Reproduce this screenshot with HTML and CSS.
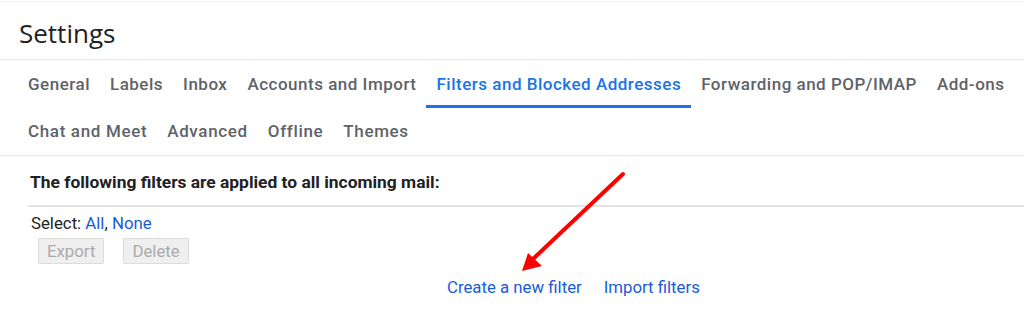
FILE: index.html
```html
<!DOCTYPE html>
<html>
<head>
<meta charset="utf-8">
<link rel="stylesheet" href="styles.css">
</head>
<body>
<div class="page">
  <header class="header"><h1 class="title">Settings</h1></header>
  <nav class="tabs">
    <div class="tab-row">
      <span class="tab">General</span>
      <span class="tab">Labels</span>
      <span class="tab">Inbox</span>
      <span class="tab">Accounts and Import</span>
      <span class="tab active">Filters and Blocked Addresses</span>
      <span class="tab">Forwarding and POP/IMAP</span>
      <span class="tab">Add-ons</span>
    </div>
    <div class="tab-row row2">
      <span class="tab">Chat and Meet</span>
      <span class="tab">Advanced</span>
      <span class="tab">Offline</span>
      <span class="tab">Themes</span>
    </div>
  </nav>
  <section class="content">
    <div class="filters-head">The following filters are applied to all incoming mail:</div>
    <div class="select">Select: <a class="link">All</a>, <a class="link">None</a></div>
    <div class="buttons">
      <button class="btn" disabled>Export</button>
      <button class="btn" disabled>Delete</button>
    </div>
    <div class="actions">
      <a class="link">Create a new filter</a>
      <a class="link">Import filters</a>
    </div>
  </section>
  <svg class="arrow" width="1024" height="325" viewBox="0 0 1024 325">
    <line x1="623" y1="174" x2="533" y2="259" stroke="#ff0000" stroke-width="4" stroke-linecap="round"/>
    <polygon points="522,271 528,253 542,266" fill="#ff0000"/>
  </svg>
</div>
</body>
</html>
```
FILE: styles.css
```css
html, body {
  margin: 0;
  padding: 0;
  background: #fff;
}
body {
  font-family: Roboto, "Liberation Sans", Arial, sans-serif;
  color: #202124;
}
.page {
  position: relative;
  width: 1024px;
  height: 325px;
  overflow: hidden;
  padding-top: 1px;
  box-sizing: border-box;
}
.header {
  border-top: 1px solid #efefef;
  height: 58px;
  box-sizing: border-box;
  padding: 16px 0 0 19px;
}
.title {
  margin: 0;
  font-family: "Open Sans", Roboto, sans-serif;
  font-weight: 400;
  font-size: 26px;
  line-height: 30px;
  color: #202124;
}
.tabs {
  border-top: 1px solid #e6e6e6;
  border-bottom: 1px solid #e6e6e6;
}
.tab-row {
  display: flex;
  padding-left: 18px;
  height: 48px;
}
.tab-row.row2 {
  height: 47px;
}
.tab {
  padding: 0 10px;
  font-size: 17px;
  font-weight: 500;
  letter-spacing: 0.5px;
  line-height: 48px;
  color: #5f6368;
  white-space: nowrap;
  box-sizing: border-box;
}
.row2 .tab {
  letter-spacing: 0.65px;
}
.tab.active {
  color: #1a73e8;
  box-shadow: inset 0 -3px 0 #1a73e8;
}
.row2 .tab {
  line-height: 47px;
}
.content {
  margin-left: 28px;
  font-size: 16.8px;
}
.filters-head {
  font-weight: 700;
  font-size: 17.4px;
  line-height: 20px;
  padding: 16px 2px 13px;
  border-bottom: 2px solid #e3e3e3;
  color: #202124;
}
.select {
  padding: 6px 3px 0;
  line-height: 20px;
  color: #222;
}
.link {
  color: #1a5bd6;
  cursor: pointer;
}
.buttons {
  display: flex;
  gap: 19px;
  margin: 5px 0 0 10px;
}
.btn {
  font-family: Roboto, "Liberation Sans", Arial, sans-serif;
  font-size: 16.8px;
  height: 26px;
  padding: 0 8px;
  background: #efefef;
  border: 1px solid #dcdcdc;
  border-radius: 2px;
  color: #ababab;
}
.actions {
  display: flex;
  gap: 22px;
  margin: 13px 0 0 419px;
  line-height: 20px;
}
.arrow {
  position: absolute;
  left: 0;
  top: 0;
  pointer-events: none;
}
```
